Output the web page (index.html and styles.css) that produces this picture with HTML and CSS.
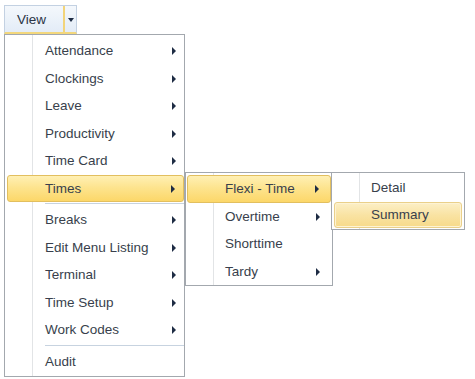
FILE: index.html
```html
<!DOCTYPE html>
<html lang="en">
<head>
    <meta charset="UTF-8">
    <title>View Menu</title>
    <link rel="stylesheet" href="styles.css">
</head>
<body>
    <div class="toolbar">
        <div class="view-btn">
            <span class="view-label">View</span>
            <span class="view-drop"><span class="down-arrow"></span></span>
        </div>

        <div class="menu main-menu">
            <div class="item sub">Attendance</div>
            <div class="item sub">Clockings</div>
            <div class="item sub">Leave</div>
            <div class="item sub">Productivity</div>
            <div class="item sub">Time Card</div>
            <div class="item sub hot">Times
                <div class="menu times-menu">
                    <div class="item sub hot">Flexi - Time
                        <div class="menu flexi-menu">
                            <div class="item">Detail</div>
                            <div class="item soft">Summary</div>
                        </div>
                    </div>
                    <div class="item sub">Overtime</div>
                    <div class="item">Shorttime</div>
                    <div class="item sub">Tardy</div>
                </div>
            </div>
            <div class="sep"></div>
            <div class="item sub">Breaks</div>
            <div class="item sub">Edit Menu Listing</div>
            <div class="item sub">Terminal</div>
            <div class="item sub">Time Setup</div>
            <div class="item sub">Work Codes</div>
            <div class="sep"></div>
            <div class="item">Audit</div>
        </div>
    </div>
</body>
</html>
```
FILE: styles.css
```css
html, body {
    height: 100%;
}

body {
    margin: 0;
    min-height: 379px;
    font-family: "Liberation Sans", Arial, sans-serif;
    font-size: 13.5px;
    color: #383f4c;
    background: #fff;
}

.toolbar {
    position: relative;
    height: 100%;
    padding: 5px 0 0 4px;
    box-sizing: border-box;
}

.view-btn {
    display: flex;
    width: 73px;
    height: 29px;
    box-sizing: border-box;
    border: 1px solid #c3d1e2;
    border-bottom: 2px solid #f3d77c;
    background: linear-gradient(#f4f8fc, #e3ecf7);
}

.view-label {
    width: 58px;
    padding-left: 12px;
    line-height: 27px;
    box-sizing: border-box;
    color: #2a3446;
}

.view-drop {
    flex: 1;
    display: flex;
    align-items: center;
    justify-content: center;
    border-left: 2px solid #f2d47a;
}

.down-arrow {
    border-top: 4px solid #1e2c44;
    border-left: 3px solid transparent;
    border-right: 3px solid transparent;
    margin-top: 2px;
}

.menu {
    position: absolute;
    box-sizing: border-box;
    border: 1px solid #a3a8ae;
    background-color: #fff;
    background-image: linear-gradient(to right, transparent 27px, #e2e4e6 27px, #e2e4e6 28px, #fff 28px);
    background-repeat: no-repeat;
    background-size: 29px 100%;
}

.main-menu {
    top: 34px;
    left: 4px;
    width: 181px;
    padding: 2px 0 1px 2px;
}

.times-menu {
    top: -3.5px;
    left: 177px;
    width: 148px;
    padding: 2px 1px 0 1px;
}

.flexi-menu {
    top: -4px;
    left: 143px;
    width: 134px;
    padding: 2px 2px 1px 2px;
}

.item {
    position: relative;
    height: 27.5px;
    line-height: 27.5px;
    padding-left: 38px;
    box-sizing: border-box;
    white-space: nowrap;
}

.flexi-menu .item {
    height: 26.5px;
    line-height: 26.5px;
    padding-left: 37px;
}

.sub::after {
    content: "";
    position: absolute;
    right: 8px;
    top: 10px;
    border-left: 4px solid #1e2c44;
    border-top: 4px solid transparent;
    border-bottom: 4px solid transparent;
}

.times-menu .sub::after {
    right: 11px;
}

.hot {
    border: 1px solid #e2bf5f;
    border-radius: 3px;
    line-height: 25.5px;
    padding-left: 37px;
    background: linear-gradient(#fff0b4, #fde48f 45%, #fcd769);
}

.hot::after {
    top: 9px;
}

.flexi-menu .soft {
    border: 1px solid #ead08a;
    border-radius: 3px;
    line-height: 24.5px;
    padding-left: 36px;
    box-shadow: inset 0 0 0 1px #fdf3d4;
    background: linear-gradient(#fcefc6, #f9e3a3 50%, #f7da8a);
}

.sep {
    height: 4px;
    margin-left: 38px;
    background: linear-gradient(#c7d3e0, #c7d3e0) 0 1px / 100% 1px no-repeat;
}
```
